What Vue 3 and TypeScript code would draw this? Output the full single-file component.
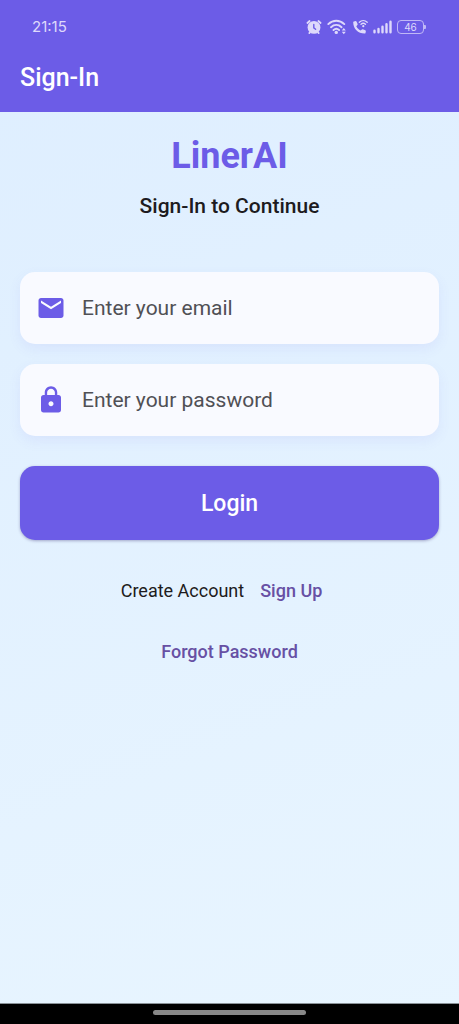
<script setup lang="ts">
import { ref } from 'vue'

const email = ref('')
const password = ref('')
</script>

<template>
  <div class="screen">
    <header class="app-bar">
      <div class="status">
        <time class="clock">21:15</time>
        <div class="status-icons">
          <svg width="16" height="16" viewBox="0 0 16 16" aria-label="Alarm">
            <circle cx="8" cy="8.4" r="6.4" fill="currentColor" />
            <path d="M1.400 4 3.600 2M14.600 4 12.400 2" stroke="currentColor" stroke-width="1.800" stroke-linecap="round" />
            <path d="M4 13.200l-.7.900M12 13.200l.7.900" stroke="currentColor" stroke-width="1.800" stroke-linecap="round" />
            <path d="M7.800 5.400v3.400l1.800 1.400" fill="none" stroke="#6c5ce7" stroke-width="1.400" stroke-linecap="round" />
          </svg>
          <svg width="20" height="16" viewBox="0 0 20 16" aria-label="Wi-Fi">
            <g fill="none" stroke="currentColor" stroke-width="1.900" stroke-linecap="round">
              <path d="M1.300 5.100C6 .7 12.600 .7 17.300 5.100" />
              <path d="M4 8.200c3.200-2.900 7.400-2.900 10.600 0" />
              <path d="M6.500 11c1.700-1.500 3.900-1.500 5.600 0" />
            </g>
            <circle cx="9.300" cy="13.400" r="1.700" fill="currentColor" />
            <path d="m14.800 11.400 2-2.500 2 2.500zM14.800 12.800l2 2.500 2-2.500z" fill="currentColor" />
          </svg>
          <svg width="16" height="16" viewBox="0 0 16 16" aria-label="Wi-Fi calling">
            <path d="M1.900 2.500 3.700 2.100q.6 0 .9.600l1 2.400q.2.600-.2 1L4.300 7.200c1 2 2.400 3.400 4.400 4.400l1.200-1.200q.4-.4 1-.2l2.400 1q.6.300.6.900l-.4 1.800q-.2.700-.9.700C6 14.600 1.200 9.800 1.200 3.300q0-.7.700-.8z" fill="currentColor" />
            <g fill="none" stroke="currentColor" stroke-width="1.300" stroke-linecap="round">
              <path d="M7.300 3.200c2.300-2.200 5.600-2.200 7.900 0" />
              <path d="M9 5.300c1.300-1.200 3.200-1.200 4.500 0" />
            </g>
            <circle cx="11.300" cy="7.200" r="1.100" fill="currentColor" />
          </svg>
          <svg width="19" height="14" viewBox="0 0 19 14" aria-label="Signal">
            <path d="M1.500 12.200v-1.400M5.500 12.200V9M9.500 12.200V6.800M13.500 12.200V4.300M17.500 12.200V1.800" stroke="currentColor" stroke-width="2.400" stroke-linecap="round" />
          </svg>
          <div class="battery">46</div>
        </div>
      </div>
      <h1 class="bar-title">Sign-In</h1>
    </header>

    <main class="content">
      <h2 class="brand">LinerAI</h2>
      <p class="subtitle">Sign-In to Continue</p>

      <form class="form" @submit.prevent>
        <label class="field">
          <svg width="30" height="30" viewBox="0 0 24 24" fill="currentColor" aria-hidden="true">
            <path d="M20 4H4c-1.100 0-1.990.9-1.990 2L2 18c0 1.100.9 2 2 2h16c1.100 0 2-.9 2-2V6c0-1.100-.9-2-2-2zm0 4-8 5-8-5V6l8 5 8-5v2z" />
          </svg>
          <input v-model="email" type="email" placeholder="Enter your email" aria-label="Email" />
        </label>
        <label class="field">
          <svg width="30" height="30" viewBox="0 0 24 24" fill="currentColor" aria-hidden="true">
            <path d="M18 8h-1V6c0-2.760-2.240-5-5-5S7 3.240 7 6v2H6c-1.100 0-2 .9-2 2v10c0 1.100.9 2 2 2h12c1.100 0 2-.9 2-2V10c0-1.100-.9-2-2-2zm-6 9c-1.100 0-2-.9-2-2s.9-2 2-2 2 .9 2 2-.9 2-2 2zm3.100-9H8.900V6c0-1.710 1.390-3.100 3.100-3.100s3.100 1.390 3.100 3.100v2z" />
          </svg>
          <input v-model="password" type="password" placeholder="Enter your password" aria-label="Password" />
        </label>
        <button class="login" type="submit">Login</button>
      </form>

      <div class="signup">
        <span>Create Account</span>
        <a class="link" href="#signup">Sign Up</a>
      </div>
      <a class="link" href="#forgot">Forgot Password</a>
    </main>

    <footer class="nav-bar"><div class="handle"></div></footer>
  </div>
</template>

<style>
body {
  margin: 0;
}
</style>

<style scoped>
.screen {
  display: flex;
  flex-direction: column;
  min-height: 100vh;
  font-family: Roboto, "Liberation Sans", sans-serif;
  background: linear-gradient(160deg, #deeeff, #e8f5ff);
}

.app-bar {
  background: #6c5ce7;
  color: #fff;
}

.status {
  display: flex;
  align-items: center;
  justify-content: space-between;
  height: 53px;
  padding: 0 35px 0 32px;
  color: #ded9fb;
}

.clock {
  font: 15px/20px Inter, Roboto, sans-serif;
}

.status-icons {
  display: flex;
  align-items: center;
  gap: 5px;
}

.status-icons svg {
  display: block;
}

.battery {
  position: relative;
  box-sizing: border-box;
  width: 27px;
  height: 14px;
  border: 1px solid #c0b8f6;
  border-radius: 4px;
  font: 10px/12px Inter, Roboto, sans-serif;
  text-align: center;
}

.battery::after {
  content: "";
  position: absolute;
  top: 4px;
  right: -3px;
  width: 2px;
  height: 4px;
  border-radius: 0 1px 1px 0;
  background: #c0b8f6;
}

.bar-title {
  margin: 0;
  padding: 9px 20px 18px;
  font-size: 25px;
  font-weight: 500;
  line-height: 32px;
}

.content {
  display: flex;
  flex: 1;
  flex-direction: column;
  align-items: center;
  padding: 20px;
}

.brand {
  margin: 0;
  color: #6c5ce7;
  font-size: 36px;
  font-weight: 700;
  line-height: 48px;
}

.subtitle {
  margin: 12px 0 0;
  color: #1d1b20;
  font-size: 21px;
  font-weight: 500;
  line-height: 28px;
}

.form {
  display: flex;
  flex-direction: column;
  gap: 20px;
  align-self: stretch;
  margin-top: 52px;
}

.field {
  display: flex;
  align-items: center;
  gap: 16px;
  height: 72px;
  padding: 0 16px;
  border-radius: 15px;
  background: #f9faff;
  color: #6c5ce7;
  box-shadow: 0 5px 13px rgba(108, 92, 231, 0.08);
}

.field svg {
  flex: none;
}

.field input {
  flex: 1;
  min-width: 0;
  padding: 0;
  border: 0;
  outline: 0;
  background: transparent;
  color: #1d1b20;
  font: 21px/28px Roboto, "Liberation Sans", sans-serif;
}

.field input::placeholder {
  color: #505055;
  opacity: 1;
}

.login {
  height: 74px;
  margin-top: 10px;
  padding: 2px 0 0;
  border: 0;
  border-radius: 15px;
  background: #6c5ce7;
  color: #fff;
  font: 500 23px/32px Roboto, "Liberation Sans", sans-serif;
  box-shadow: 0 1px 3px rgba(40, 30, 100, 0.35);
}

.signup {
  display: flex;
  gap: 16px;
  margin: 39px 0 37px;
  padding-right: 16px;
  color: #1d1b20;
  font-size: 18px;
  line-height: 24px;
}

.link {
  color: #6750a4;
  font-size: 18px;
  font-weight: 500;
  line-height: 24px;
  text-decoration: none;
}

.nav-bar {
  display: flex;
  justify-content: center;
  height: 20px;
  border-top: 1px solid #8a9298;
  background: #000;
}

.handle {
  width: 33.33%;
  height: 5px;
  margin-top: 6px;
  border-radius: 3px;
  background: #888;
}
</style>
